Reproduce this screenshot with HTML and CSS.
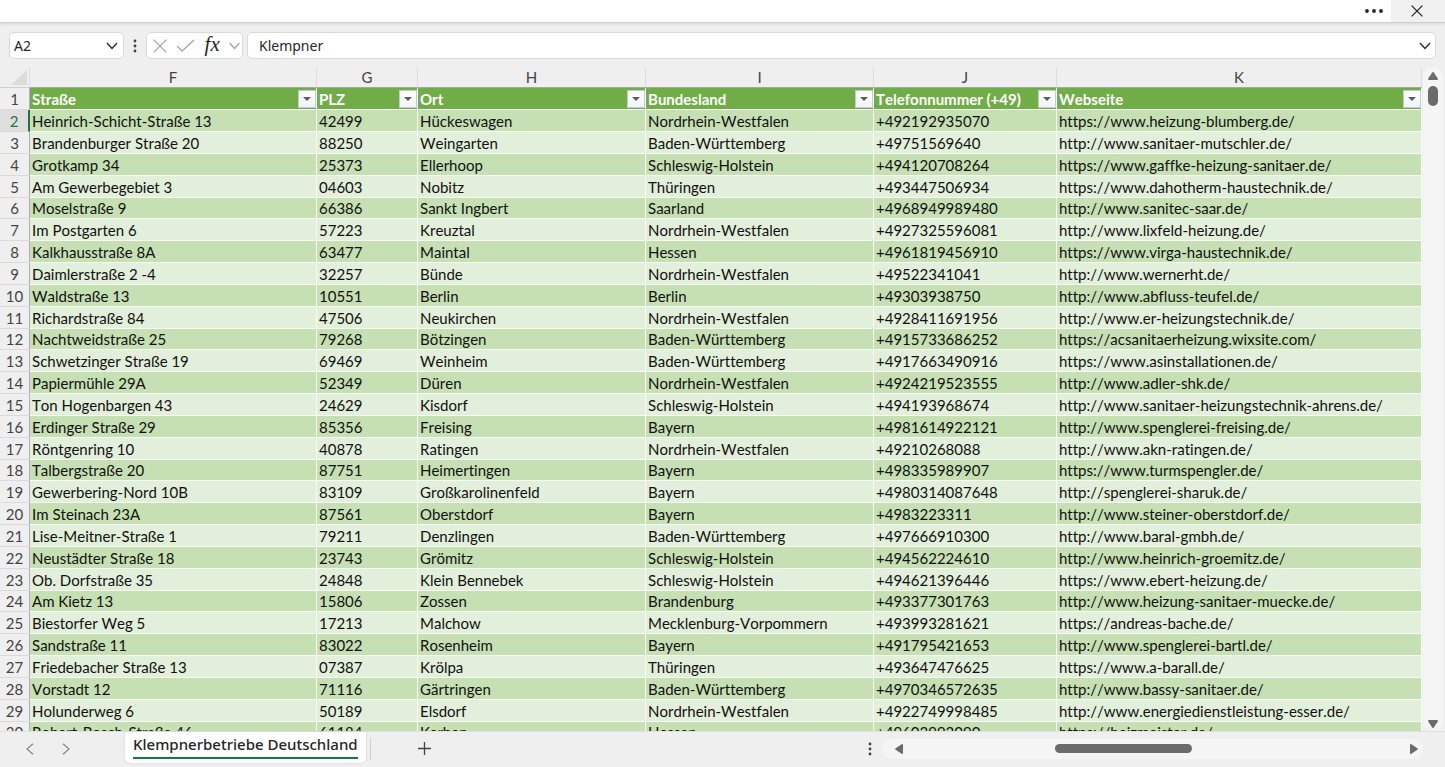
FILE: index.html
```html
<!DOCTYPE html>
<html lang="de">
<head>
<meta charset="utf-8">
<title>Klempnerbetriebe Deutschland</title>
<link rel="stylesheet" href="styles.css">
</head>
<body>
<header class="topbar">
  <button class="topbar-btn" aria-label="Mehr"><svg width="20" height="6" viewBox="0 0 20 6"><circle cx="3" cy="3" r="1.9"/><circle cx="10" cy="3" r="1.9"/><circle cx="17" cy="3" r="1.9"/></svg></button>
  <button class="topbar-btn close" aria-label="Schließen"><svg width="12" height="12" viewBox="0 0 12 12"><path class="stroke" d="M.6.6l10.8 10.8M11.4.6.6 11.4"/></svg></button>
</header>
<div class="formula-row">
  <div class="box name-box">
    <input class="name-input" aria-label="Namenfeld" value="A2">
    <button class="icon-btn" aria-label="Namen öffnen"><svg width="12" height="8" viewBox="0 0 12 8"><path class="stroke" d="M1 1l5 5.5L11 1"/></svg></button>
  </div>
  <svg class="grip" width="4" height="14" viewBox="0 0 4 14"><circle cx="2" cy="2" r="1.4"/><circle cx="2" cy="7" r="1.4"/><circle cx="2" cy="12" r="1.4"/></svg>
  <div class="box fx-box">
    <button class="icon-btn muted" aria-label="Abbrechen"><svg width="14" height="14" viewBox="0 0 14 14"><path class="stroke" d="M.6.6l12.8 12.8M13.4.6.6 13.4"/></svg></button>
    <button class="icon-btn muted" aria-label="Eingeben"><svg width="19" height="13" viewBox="0 0 19 13"><path class="stroke" d="M1 7l5 5L18 1"/></svg></button>
    <button class="icon-btn fx" aria-label="Funktion einfügen"><i>fx</i></button>
    <button class="icon-btn muted" aria-label="Funktionen"><svg width="11" height="8" viewBox="0 0 11 8"><path class="stroke" d="M.6 1l4.9 5.5L10.4 1"/></svg></button>
  </div>
  <div class="box formula-box">
    <input class="formula-input" aria-label="Bearbeitungsleiste" value="Klempner">
    <button class="icon-btn" aria-label="Erweitern"><svg width="12" height="8" viewBox="0 0 12 8"><path class="stroke" d="M1 1l5 5.5L11 1"/></svg></button>
  </div>
</div>
<main class="workspace">
  <div class="sheet">
    <table class="grid">
      <colgroup><col class="c-num"><col class="c-f"><col class="c-g"><col class="c-h"><col class="c-i"><col class="c-j"><col></colgroup>
      <thead>
        <tr><th class="corner"><svg width="16" height="15" viewBox="0 0 16 15"><path d="M16 0v15H0z"/></svg></th><th>F</th><th>G</th><th>H</th><th>I</th><th>J</th><th>K</th></tr>
      </thead>
      <tbody>
        <tr class="titles"><th>1</th>
          <td><div class="title">Straße<button class="filter" aria-label="Straße filtern"></button></div></td>
          <td><div class="title">PLZ<button class="filter" aria-label="PLZ filtern"></button></div></td>
          <td><div class="title">Ort<button class="filter" aria-label="Ort filtern"></button></div></td>
          <td><div class="title">Bundesland<button class="filter" aria-label="Bundesland filtern"></button></div></td>
          <td><div class="title">Telefonnummer (+49)<button class="filter" aria-label="Telefonnummer filtern"></button></div></td>
          <td><div class="title">Webseite<button class="filter" aria-label="Webseite filtern"></button></div></td></tr>
        <tr class="active"><th>2</th><td>Heinrich-Schicht-Straße 13</td><td>42499</td><td>Hückeswagen</td><td>Nordrhein-Westfalen</td><td>+492192935070</td><td>https://www.heizung-blumberg.de/</td></tr>
        <tr><th>3</th><td>Brandenburger Straße 20</td><td>88250</td><td>Weingarten</td><td>Baden-Württemberg</td><td>+49751569640</td><td>http://www.sanitaer-mutschler.de/</td></tr>
        <tr><th>4</th><td>Grotkamp 34</td><td>25373</td><td>Ellerhoop</td><td>Schleswig-Holstein</td><td>+494120708264</td><td>https://www.gaffke-heizung-sanitaer.de/</td></tr>
        <tr><th>5</th><td>Am Gewerbegebiet 3</td><td>04603</td><td>Nobitz</td><td>Thüringen</td><td>+493447506934</td><td>https://www.dahotherm-haustechnik.de/</td></tr>
        <tr><th>6</th><td>Moselstraße 9</td><td>66386</td><td>Sankt Ingbert</td><td>Saarland</td><td>+4968949989480</td><td>http://www.sanitec-saar.de/</td></tr>
        <tr><th>7</th><td>Im Postgarten 6</td><td>57223</td><td>Kreuztal</td><td>Nordrhein-Westfalen</td><td>+4927325596081</td><td>http://www.lixfeld-heizung.de/</td></tr>
        <tr><th>8</th><td>Kalkhausstraße 8A</td><td>63477</td><td>Maintal</td><td>Hessen</td><td>+4961819456910</td><td>https://www.virga-haustechnik.de/</td></tr>
        <tr><th>9</th><td>Daimlerstraße 2 -4</td><td>32257</td><td>Bünde</td><td>Nordrhein-Westfalen</td><td>+49522341041</td><td>http://www.wernerht.de/</td></tr>
        <tr><th>10</th><td>Waldstraße 13</td><td>10551</td><td>Berlin</td><td>Berlin</td><td>+49303938750</td><td>http://www.abfluss-teufel.de/</td></tr>
        <tr><th>11</th><td>Richardstraße 84</td><td>47506</td><td>Neukirchen</td><td>Nordrhein-Westfalen</td><td>+4928411691956</td><td>http://www.er-heizungstechnik.de/</td></tr>
        <tr><th>12</th><td>Nachtweidstraße 25</td><td>79268</td><td>Bötzingen</td><td>Baden-Württemberg</td><td>+4915733686252</td><td>https://acsanitaerheizung.wixsite.com/</td></tr>
        <tr><th>13</th><td>Schwetzinger Straße 19</td><td>69469</td><td>Weinheim</td><td>Baden-Württemberg</td><td>+4917663490916</td><td>https://www.asinstallationen.de/</td></tr>
        <tr><th>14</th><td>Papiermühle 29A</td><td>52349</td><td>Düren</td><td>Nordrhein-Westfalen</td><td>+4924219523555</td><td>http://www.adler-shk.de/</td></tr>
        <tr><th>15</th><td>Ton Hogenbargen 43</td><td>24629</td><td>Kisdorf</td><td>Schleswig-Holstein</td><td>+494193968674</td><td>http://www.sanitaer-heizungstechnik-ahrens.de/</td></tr>
        <tr><th>16</th><td>Erdinger Straße 29</td><td>85356</td><td>Freising</td><td>Bayern</td><td>+4981614922121</td><td>http://www.spenglerei-freising.de/</td></tr>
        <tr><th>17</th><td>Röntgenring 10</td><td>40878</td><td>Ratingen</td><td>Nordrhein-Westfalen</td><td>+49210268088</td><td>http://www.akn-ratingen.de/</td></tr>
        <tr><th>18</th><td>Talbergstraße 20</td><td>87751</td><td>Heimertingen</td><td>Bayern</td><td>+498335989907</td><td>https://www.turmspengler.de/</td></tr>
        <tr><th>19</th><td>Gewerbering-Nord 10B</td><td>83109</td><td>Großkarolinenfeld</td><td>Bayern</td><td>+4980314087648</td><td>http://spenglerei-sharuk.de/</td></tr>
        <tr><th>20</th><td>Im Steinach 23A</td><td>87561</td><td>Oberstdorf</td><td>Bayern</td><td>+4983223311</td><td>http://www.steiner-oberstdorf.de/</td></tr>
        <tr><th>21</th><td>Lise-Meitner-Straße 1</td><td>79211</td><td>Denzlingen</td><td>Baden-Württemberg</td><td>+497666910300</td><td>http://www.baral-gmbh.de/</td></tr>
        <tr><th>22</th><td>Neustädter Straße 18</td><td>23743</td><td>Grömitz</td><td>Schleswig-Holstein</td><td>+494562224610</td><td>http://www.heinrich-groemitz.de/</td></tr>
        <tr><th>23</th><td>Ob. Dorfstraße 35</td><td>24848</td><td>Klein Bennebek</td><td>Schleswig-Holstein</td><td>+494621396446</td><td>https://www.ebert-heizung.de/</td></tr>
        <tr><th>24</th><td>Am Kietz 13</td><td>15806</td><td>Zossen</td><td>Brandenburg</td><td>+493377301763</td><td>http://www.heizung-sanitaer-muecke.de/</td></tr>
        <tr><th>25</th><td>Biestorfer Weg 5</td><td>17213</td><td>Malchow</td><td>Mecklenburg-Vorpommern</td><td>+493993281621</td><td>https://andreas-bache.de/</td></tr>
        <tr><th>26</th><td>Sandstraße 11</td><td>83022</td><td>Rosenheim</td><td>Bayern</td><td>+491795421653</td><td>http://www.spenglerei-bartl.de/</td></tr>
        <tr><th>27</th><td>Friedebacher Straße 13</td><td>07387</td><td>Krölpa</td><td>Thüringen</td><td>+493647476625</td><td>https://www.a-barall.de/</td></tr>
        <tr><th>28</th><td>Vorstadt 12</td><td>71116</td><td>Gärtringen</td><td>Baden-Württemberg</td><td>+4970346572635</td><td>http://www.bassy-sanitaer.de/</td></tr>
        <tr><th>29</th><td>Holunderweg 6</td><td>50189</td><td>Elsdorf</td><td>Nordrhein-Westfalen</td><td>+4922749998485</td><td>http://www.energiedienstleistung-esser.de/</td></tr>
        <tr><th>30</th><td>Robert-Bosch-Straße 46</td><td>61184</td><td>Karben</td><td>Hessen</td><td>+49603992090</td><td>https://heizmeister.de/</td></tr>
      </tbody>
    </table>
  </div>
  <div class="vscroll">
    <svg width="10" height="8" viewBox="0 0 10 8"><path d="M4.2.6a1 1 0 0 1 1.6 0L9.8 6.6Q10.3 8 9 8H1Q-.3 8 .2 6.6z"/></svg>
    <div class="vthumb"></div>
    <svg class="down" width="10" height="8" viewBox="0 0 10 8"><path d="M4.2 7.4a1 1 0 0 0 1.6 0L9.8 1.4Q10.3 0 9 0H1Q-.3 0 .2 1.4z"/></svg>
  </div>
</main>
<footer class="tabbar">
  <nav class="tabs">
    <button class="icon-btn arrow" aria-label="Zurück"><svg width="8" height="12" viewBox="0 0 8 12"><path class="stroke" d="M7 .8L1 6l6 5.2"/></svg></button>
    <button class="icon-btn arrow" aria-label="Weiter"><svg width="8" height="12" viewBox="0 0 8 12"><path class="stroke" d="M1 .8L7 6l-6 5.2"/></svg></button>
    <button class="tab"><span class="tab-label">Klempnerbetriebe Deutschland</span></button>
    <span class="divider"></span>
    <button class="icon-btn add" aria-label="Neues Blatt"><svg width="13" height="13" viewBox="0 0 13 13"><path class="stroke" d="M6.5 0v13M0 6.5h13"/></svg></button>
  </nav>
  <svg class="grip" width="4" height="14" viewBox="0 0 4 14"><circle cx="2" cy="2" r="1.4"/><circle cx="2" cy="7" r="1.4"/><circle cx="2" cy="12" r="1.4"/></svg>
  <div class="hscroll">
    <svg width="8" height="10" viewBox="0 0 8 10"><path d="M.6 4.2a1 1 0 0 0 0 1.6L6.6 9.8Q8 10.3 8 9V1Q8-.3 6.6.2z"/></svg>
    <div class="htrack"><div class="hthumb"></div></div>
    <svg width="8" height="10" viewBox="0 0 8 10"><path d="M7.4 4.2a1 1 0 0 1 0 1.6L1.4 9.8Q0 10.3 0 9V1Q0-.3 1.4.2z"/></svg>
  </div>
</footer>
</body>
</html>
```
FILE: styles.css
```css
* { box-sizing: border-box; }
body {
  margin: 0;
  height: 100vh;
  display: flex;
  flex-direction: column;
  overflow: hidden;
  background: #efefef;
  color: #262626;
  font-family: "Noto Sans", "Open Sans", sans-serif;
  font-size: 14px;
}
button, input { font: inherit; color: inherit; border: 0; padding: 0; margin: 0; background: none; }
svg { display: block; flex: none; fill: currentColor; }
.stroke { fill: none; stroke: currentColor; stroke-width: 1.3; }

.topbar {
  flex: none;
  height: 23px;
  display: flex;
  justify-content: flex-end;
  background: #fff;
  border-bottom: 1px solid #cfcfcf;
  box-shadow: 0 1px 3px #d4d4d4;
}
.topbar-btn { width: 34px; display: flex; align-items: center; justify-content: center; }
.topbar-btn.close { width: 54px; padding-right: 2px; background: #f0f0f0; }

.formula-row {
  flex: none;
  display: flex;
  align-items: center;
  gap: 4px;
  padding: 9px 9px 8px;
}
.box {
  height: 27px;
  display: flex;
  align-items: center;
  background: #fff;
  border: 1px solid #d9d9d9;
  border-radius: 5px;
}
.icon-btn { flex: none; display: flex; align-items: center; justify-content: center; }
.muted { color: #a3a3a3; }
.name-box { width: 115px; padding: 0 5px 0 4px; }
.name-input, .formula-input { flex: 1; min-width: 0; }
.grip { margin: 0 5px; color: #404040; }
.fx-box { width: 97px; padding: 0 2px 0 6px; justify-content: space-between; }
.fx { font-family: "Liberation Serif", serif; font-size: 21px; line-height: 20px; font-weight: 400; -webkit-text-stroke: 0; padding-bottom: 3px; }
.formula-box { flex: 1; padding: 0 4px 0 11px; }

.workspace { flex: 1; min-height: 0; display: flex; }
.sheet { flex: 1; min-width: 0; overflow: hidden; }
.grid {
  width: 100%;
  table-layout: fixed;
  border-collapse: separate;
  border-spacing: 0;
  font-family: Lato, "Noto Sans", sans-serif;
  font-size: 15px;
  font-kerning: none;
  font-variant-ligatures: none;
  line-height: 20px;
  color: #111;
}
.c-num { width: 30px; }
.c-f { width: 287px; }
.c-g { width: 101px; }
.c-h, .c-i { width: 228px; }
.c-j { width: 183px; }
.grid th, .grid td { height: 22px; padding: 0 2px; white-space: nowrap; overflow: hidden; }
.grid th { font-weight: 400; color: #444; text-align: center; border-right: 1px solid #dcdcdc; }
.grid thead th { height: 21px; border-bottom: 1px solid #a6a6a6; }
.grid thead .corner { padding: 0; border-bottom-color: #d0d0d0; }
.corner svg { margin-left: auto; margin-right: 2px; color: #dcdcdc; }
.grid tbody th { padding: 0; border-bottom: 1px solid #dadada; border-right-color: #b0b0b0; }
.grid td { text-align: left; border-right: 1px solid #f7fbf5; border-bottom: 1px solid #f7fbf5; background: #e2efda; }
.grid tbody tr:nth-child(even) td { background: #c6e0b4; }
.grid tbody tr:nth-child(6n) th, .grid tbody tr:nth-child(6n) td { height: 21px; }
.grid .titles td { background: #70ad47; color: #fff; font-weight: 700; padding-right: 0; }
.title { display: flex; align-items: center; justify-content: space-between; }
.filter {
  width: 18px;
  height: 18px;
  display: flex;
  align-items: center;
  justify-content: center;
  background: linear-gradient(#fff, #f1f3f8);
  border: 1px solid #c5cad6;
}
.filter::after { content: ""; border: 4px solid transparent; border-top-color: #5c5c5c; border-bottom: 0; }
.grid .active th { background: #dedede; color: #217346; border-right: 2px solid #217346; }

.vscroll {
  flex: none;
  width: 20px;
  margin: 0 2px 0 1px;
  padding: 5px 0 3px;
  display: flex;
  flex-direction: column;
  align-items: center;
  gap: 6px;
  background: #f5f5f5;
  border-radius: 10px;
  color: #6b6b6b;
}
.vthumb { width: 10px; height: 20px; border-radius: 5px; background: #6b6b6b; }
.down { margin-top: auto; }

.tabbar { flex: none; height: 36px; display: flex; align-items: center; border-top: 1px solid #e0e0e0; padding: 0 22px 2px 0; }
.tabs { flex: 1; align-self: stretch; display: flex; align-items: center; padding-left: 26px; }
.arrow { width: 8px; margin-right: 28px; color: #8a8a8a; }
.tab {
  align-self: flex-start;
  margin-left: 27px;
  height: 31px;
  padding: 0 8px 4px;
  background: #fff;
  border-radius: 0 0 5px 5px;
  box-shadow: 0 0 2px #c4c4c4;
  font-size: 15px;
  font-weight: 500;
  line-height: 25px;
}
.tab-label { display: block; border-bottom: 2px solid #107c41; }
.divider { width: 1px; height: 22px; margin: 0 47px 0 4px; background: #cfcfcf; }
.add { color: #444; }
.hscroll {
  width: 38%;
  height: 20px;
  margin-left: 5px;
  padding: 0 5px 0 13px;
  display: flex;
  align-items: center;
  background: #f5f5f5;
  border-radius: 10px;
  color: #6b6b6b;
}
.htrack { flex: 1; }
.hthumb { width: 27%; height: 9px; margin-left: 30%; border-radius: 5px; background: #6b6b6b; }
```
